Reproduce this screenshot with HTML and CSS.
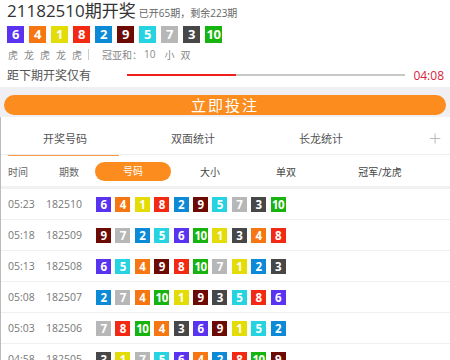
FILE: index.html
```html
<!DOCTYPE html>
<html lang="zh-CN">
<head>
    <meta charset="UTF-8">
    <meta name="viewport" content="width=device-width, initial-scale=1.0">
    <title>开奖</title>
    <link rel="stylesheet" href="styles.css">
</head>
<body>
    <!-- 本期开奖 -->
    <section class="draw">
        <div class="title">21182510期开奖<small>已开65期，剩余223期</small></div>
        <div class="balls big">
            <span class="b6">6</span><span class="b4">4</span><span class="b1">1</span><span class="b8">8</span><span class="b2">2</span><span class="b9">9</span><span class="b5">5</span><span class="b7">7</span><span class="b3">3</span><span class="b10">10</span>
        </div>
        <div class="meta">
            <span>虎</span><span>龙</span><span>虎</span><span>龙</span><span>虎</span>
            <i class="sep"></i>
            <span class="sum">冠亚和：</span><span class="sum-val">10</span><span>小</span><span>双</span>
        </div>
        <div class="countdown">
            <span class="label">距下期开奖仅有</span>
            <div class="progress"><div class="fill" style="width: 39%"></div></div>
            <span class="time">04:08</span>
        </div>
    </section>

    <div class="bet-bar">
        <button class="bet-btn">立即投注</button>
    </div>

    <div class="panel">
        <!-- 标签页 -->
        <nav class="tabs">
            <a class="tab active">开奖号码</a>
            <a class="tab">双面统计</a>
            <a class="tab">长龙统计</a>
            <a class="plus">+</a>
        </nav>

        <div class="cols">
            <span class="c-time">时间</span>
            <span class="c-issue">期数</span>
            <span class="c-pill">号码</span>
            <span class="c-size">大小</span>
            <span class="c-odd">单双</span>
            <span class="c-dt">冠军/龙虎</span>
        </div>

        <ul class="rows" id="rows"></ul>
    </div>

    <script>
        // 历史开奖数据
        const history = [
            ['05:23', '182510', [6, 4, 1, 8, 2, 9, 5, 7, 3, 10]],
            ['05:18', '182509', [9, 7, 2, 5, 6, 10, 1, 3, 4, 8]],
            ['05:13', '182508', [6, 5, 4, 9, 8, 10, 7, 1, 2, 3]],
            ['05:08', '182507', [2, 7, 4, 10, 1, 9, 3, 5, 8, 6]],
            ['05:03', '182506', [7, 8, 10, 4, 3, 6, 9, 1, 5, 2]],
            ['04:58', '182505', [3, 1, 7, 5, 6, 4, 2, 8, 10, 9]]
        ];

        const rows = document.getElementById('rows');
        history.forEach(([time, issue, nums]) => {
            const li = document.createElement('li');
            const balls = nums.map(n => `<span class="b${n}">${n}</span>`).join('');
            li.innerHTML = `<span class="r-time">${time}</span><span class="r-issue">${issue}</span><div class="balls">${balls}</div>`;
            rows.appendChild(li);
        });
    </script>
</body>
</html>
```

FILE: styles.css
```css
* {
    margin: 0;
    padding: 0;
    box-sizing: border-box;
}

html, body {
    height: 360px;
    overflow: hidden;
}

body {
    font-family: "Open Sans", "Noto Sans CJK SC", sans-serif;
    background-color: #fff;
    color: #555;
    width: 450px;
}

/* 本期开奖 */
.draw {
    padding: 0 6px 0 7px;
}

.title {
    font-size: 17px;
    line-height: 22px;
    color: #333;
}

.title small {
    font-size: 10px;
    color: #666;
    margin-left: 3px;
}

.balls {
    display: flex;
    gap: 5px;
}

.balls span {
    width: 15px;
    height: 15px;
    line-height: 15px;
    text-align: center;
    color: #fff;
    font-size: 11.5px;
    font-weight: bold;
    font-family: "Open Sans", sans-serif;
    letter-spacing: -0.5px;
}

.balls.big {
    margin-top: 2px;
}

.balls.big span {
    width: 17px;
    height: 17px;
    line-height: 17px;
    font-size: 13px;
}

.b1 { background-color: #e3dc06; }
.b2 { background-color: #0d8ad6; }
.b3 { background-color: #474747; }
.b4 { background-color: #f67711; }
.b5 { background-color: #25d3e1; }
.b6 { background-color: #5a33f0; }
.b7 { background-color: #b7b7b7; }
.b8 { background-color: #f22a13; }
.b9 { background-color: #6c0a03; }
.b10 { background-color: #17b410; }

.meta {
    display: flex;
    align-items: center;
    font-size: 10px;
    color: #888;
    margin-top: 4px;
    height: 14px;
    padding-left: 1px;
}

.meta span {
    margin-right: 6px;
}

.meta .sep {
    width: 1px;
    height: 11px;
    background-color: #ccc;
    margin: 0 13px 0 0;
}

.meta .sum {
    margin-right: 2px;
}

.meta .sum-val {
    margin-right: 9px;
}

.countdown {
    display: flex;
    align-items: center;
    height: 20px;
    margin-top: 4px;
    margin-bottom: 2px;
}

.countdown .label {
    font-size: 12px;
    color: #555;
    width: 121px;
}

.progress {
    width: 280px;
    height: 2px;
    background-color: #c8c8c8;
}

.progress .fill {
    height: 100%;
    background-color: #ee1f1a;
}

.countdown .time {
    font-size: 12px;
    color: #d8233b;
    margin-left: 8px;
}

/* 投注按钮 */
.bet-bar {
    background-color: #efeff4;
    padding: 8px 4px 2px;
    height: 30px;
}

.bet-btn {
    display: block;
    width: 100%;
    height: 20px;
    border: none;
    border-radius: 10px;
    background-color: #fb8c1d;
    color: #fff;
    font-size: 15px;
    letter-spacing: 2px;
    line-height: 20px;
    font-family: "Noto Sans CJK SC", sans-serif;
}

.panel {
    border-left: 1px solid #bbb;
}

/* 标签页 */
.tabs {
    display: flex;
    height: 38px;
    border-bottom: 1px solid #eee;
}

.tab {
    position: relative;
    width: 128px;
    text-align: center;
    line-height: 43px;
    height: 38px;
    font-size: 11px;
    color: #555;
}

.tab.active::after {
    content: "";
    position: absolute;
    left: 7px;
    right: 10px;
    bottom: -1px;
    height: 1px;
    background-color: #fb9a45;
}

.plus {
    margin-left: auto;
    width: 30px;
    text-align: center;
    font-size: 22px;
    font-weight: 300;
    line-height: 40px;
    color: #bbb;
}

.cols {
    display: flex;
    align-items: center;
    height: 34px;
    padding-top: 1px;
    font-size: 10px;
    color: #444;
    border-bottom: 3px solid #f1f1f1;
}

.c-time {
    width: 58px;
    padding-left: 7px;
    color: #666;
}

.c-issue {
    width: 36px;
    color: #666;
}

.c-pill {
    width: 76px;
    height: 19px;
    line-height: 19px;
    border-radius: 10px;
    background-color: #fb8c1d;
    color: #fff;
    text-align: center;
}

.c-size { width: 78px; text-align: center; }
.c-odd { width: 74px; text-align: center; }
.c-dt { width: 114px; text-align: center; }

/* 历史记录 */
.rows {
    list-style: none;
}

.rows li {
    display: flex;
    align-items: center;
    height: 31px;
    border-bottom: 1px solid #f0f0f0;
    font-size: 10.5px;
    color: #777;
}

.r-time {
    width: 45px;
    padding-left: 7px;
}

.r-issue {
    width: 50px;
}

.rows .balls {
    gap: 4.4px;
}
```
